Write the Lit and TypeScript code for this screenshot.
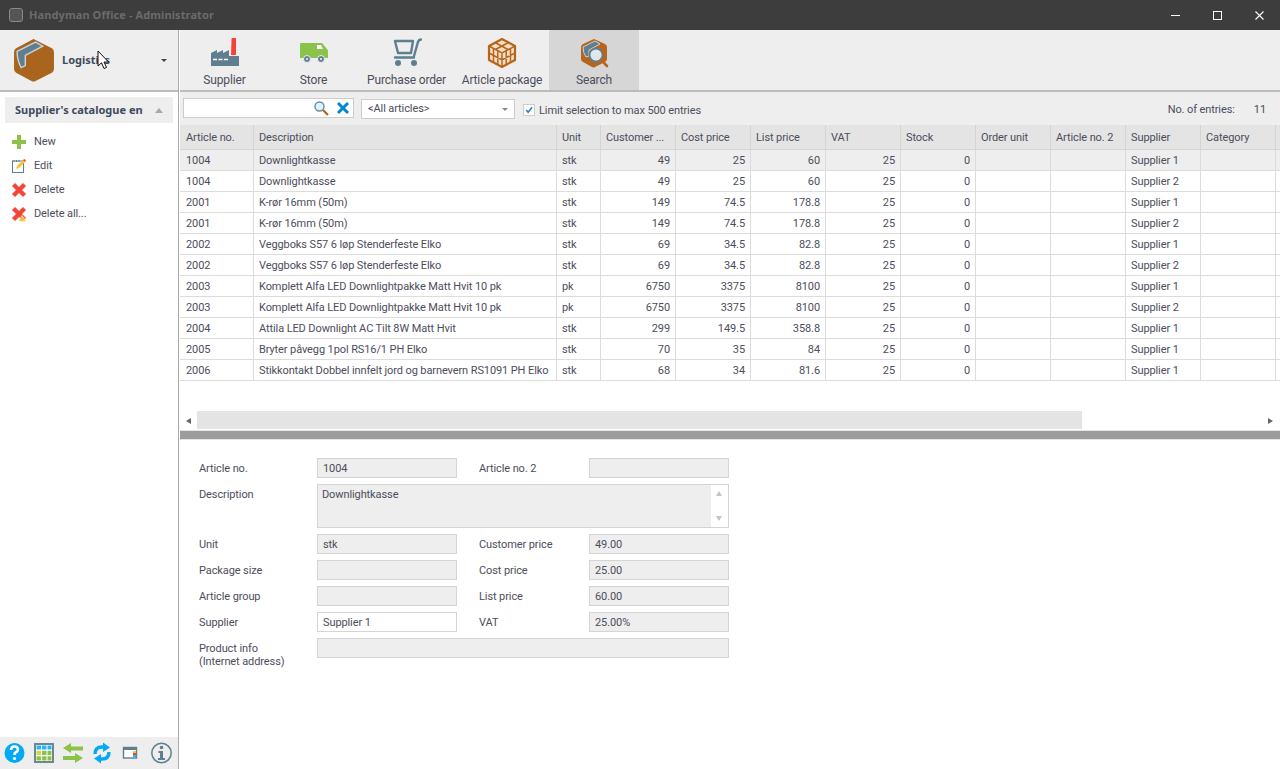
import { LitElement, css, html, svg } from "lit";
import { customElement } from "lit/decorators.js";

const columns = [
  ["Article no.", 74],
  ["Description", 303],
  ["Unit", 44],
  ["Customer ...", 75],
  ["Cost price", 75],
  ["List price", 75],
  ["VAT", 75],
  ["Stock", 75],
  ["Order unit", 75],
  ["Article no. 2", 75],
  ["Supplier", 75],
  ["Category", 75],
] as const;

const rows = [
  ["1004", "Downlightkasse", "stk", "49", "25", "60", "25", "0", "", "", "Supplier 1", ""],
  ["1004", "Downlightkasse", "stk", "49", "25", "60", "25", "0", "", "", "Supplier 2", ""],
  ["2001", "K-rør 16mm (50m)", "stk", "149", "74.5", "178.8", "25", "0", "", "", "Supplier 1", ""],
  ["2001", "K-rør 16mm (50m)", "stk", "149", "74.5", "178.8", "25", "0", "", "", "Supplier 2", ""],
  ["2002", "Veggboks S57 6 løp Stenderfeste Elko", "stk", "69", "34.5", "82.8", "25", "0", "", "", "Supplier 1", ""],
  ["2002", "Veggboks S57 6 løp Stenderfeste Elko", "stk", "69", "34.5", "82.8", "25", "0", "", "", "Supplier 2", ""],
  ["2003", "Komplett Alfa LED Downlightpakke Matt Hvit 10 pk", "pk", "6750", "3375", "8100", "25", "0", "", "", "Supplier 1", ""],
  ["2003", "Komplett Alfa LED Downlightpakke Matt Hvit 10 pk", "pk", "6750", "3375", "8100", "25", "0", "", "", "Supplier 2", ""],
  ["2004", "Attila LED Downlight AC Tilt 8W Matt Hvit", "stk", "299", "149.5", "358.8", "25", "0", "", "", "Supplier 1", ""],
  ["2005", "Bryter påvegg 1pol RS16/1 PH Elko", "stk", "70", "35", "84", "25", "0", "", "", "Supplier 1", ""],
  ["2006", "Stikkontakt Dobbel innfelt jord og barnevern RS1091 PH Elko", "stk", "68", "34", "81.6", "25", "0", "", "", "Supplier 1", ""],
];

const numeric = new Set([3, 4, 5, 6, 7]);

const boxIcon = svg`
  <path d="M20 1 L38 10 Q40 11 40 14 V30 Q40 33 38 34 L22 42 Q20 43 18 42 L3 34 Q1 33 1 30 V14 Q1 11 3 10 Z" fill="#a9641e"/>
  <path d="M4 13 L22 4 L29 8 L12 17 V27 L8 29 Q4 22 4 13 Z" fill="#5f7f90" stroke="#c9d3d8" stroke-width="1.4"/>`;

const factoryIcon = svg`
  <path d="M21.6 0 H26 V17 H21 Z" fill="#f44336"/>
  <path d="M1 28 V18 V15 L7 12 V15 L13 12 V15 L19 12 V18 H29 V28 Z" fill="#5f7f90"/>
  <path d="M3 21.5 H7 M8.5 21.5 H12.5 M14 21.5 H18" stroke="#fff" stroke-width="1.6"/>`;

const truckIcon = svg`
  <path d="M1 6 Q1 5 2 5 H23 L28 11 Q29 12 29 14 V20 H1 Z" fill="#8bc34a"/>
  <path d="M18 7 H22 L24 11 H18 Z" fill="#fff"/>
  <circle cx="8" cy="21" r="3.5" fill="#5f7f90" stroke="#eee"/>
  <circle cx="22" cy="21" r="3.5" fill="#5f7f90" stroke="#eee"/>
  <circle cx="8" cy="21" r="1" fill="#fff"/>
  <circle cx="22" cy="21" r="1" fill="#fff"/>`;

const cartIcon = svg`
  <path d="M3 3 H21 L19 15 H6 Z" fill="none" stroke="#5f7f90" stroke-width="2.4" stroke-linejoin="round"/>
  <path d="M22 18 L26 4 Q27 1.5 29 1.5 M3 19.5 H22" fill="none" stroke="#5f7f90" stroke-width="2.4" stroke-linecap="round"/>
  <circle cx="6" cy="25" r="3" fill="#5f7f90"/>
  <circle cx="22" cy="25" r="3" fill="#5f7f90"/>`;

const crateIcon = svg`
  <g transform="translate(1 0)">
    <path d="M14 1 L27 8 V22 L14 29 L1 22 V8 Z" fill="#f6dfc4" stroke="#b5651d" stroke-width="2.2" stroke-linejoin="round"/>
    <path d="M1 8 L14 15 L27 8 M14 15 V29 M7 4.5 L20 11.5 M20.5 4.5 L7.5 11.5 M5.5 10.5 V25 M9.8 13 V27 M18.2 13 V27 M22.5 10.5 V25 M1 15 L14 22 L27 15" fill="none" stroke="#b5651d" stroke-width="1.5"/>
  </g>`;

const searchBoxIcon = svg`
  <g transform="translate(1 0)">
    <path d="M14 1 L25 6 Q27 7 27 9 V21 Q27 23 25 24 L15 29 Q14 30 12 29 L3 24 Q1 23 1 21 V9 Q1 7 3 6 Z" fill="#b5651d"/>
    <path d="M3 9 L15 3 L20 6 L9 12 V18 L6 19 Q3 15 3 9 Z" fill="#5f7f90" stroke="#c9d3d8"/>
    <circle cx="16" cy="17" r="6.5" fill="#dfe7ea" stroke="#5f7f90" stroke-width="1.8"/>
    <path d="M21 22 L27 28" stroke="#b5651d" stroke-width="2.6" stroke-linecap="round"/>
  </g>`;

const tools = [
  ["Supplier", 89, factoryIcon, false],
  ["Store", 89, truckIcon, false],
  ["Purchase order", 97, cartIcon, false],
  ["Article package", 94, crateIcon, false],
  ["Search", 90, searchBoxIcon, true],
] as const;

const redCross = svg`<path d="M1.5 4 L4 1.5 L8 5.5 L12 1.5 L14.5 4 L10.5 8 L14.5 12 L12 14.5 L8 10.5 L4 14.5 L1.5 12 L5.5 8 Z" fill="#f44336" stroke="#f44336" stroke-linejoin="round"/>`;

const sideItems = [
  ["New", svg`<path d="M6 1 H10 V6 H15 V10 H10 V15 H6 V10 H1 V6 H6 Z" fill="#8bc34a"/>`],
  ["Edit", svg`<rect x="1.5" y="3" width="11" height="11.5" fill="#fff" stroke="#5f7f90"/><path d="M3 2 V4 M5.5 2 V4 M8 2 V4" stroke="#5f7f90"/><path d="M5 11 L6 8 L12 2 L14 4 L8 10 Z" fill="#fbc02d"/><path d="M12 2 L13.5 1 L15 2.5 L14 4 Z" fill="#f44336"/>`],
  ["Delete", redCross],
  ["Delete all...", svg`${redCross}<path d="M11 9.5 L15.5 15.5 H7.5 Z" fill="#fbc02d" stroke="#fff" stroke-width=".6"/>`],
] as const;

const fields = [
  ["Unit", "stk", "Customer price", "49.00"],
  ["Package size", "", "Cost price", "25.00"],
  ["Article group", "", "List price", "60.00"],
];

@customElement("app-root")
export class AppRoot extends LitElement {
  static styles = css`
    :host {
      display: flex;
      flex-direction: column;
      position: relative;
      width: 1280px;
      height: 769px;
      overflow: hidden;
      background: #fff;
      color: #4d4d5c;
      font: 11px/14px Roboto, "Noto Sans", sans-serif;
      letter-spacing: -0.1px;
    }
    svg {
      display: block;
      flex: none;
    }
    .title {
      flex: none;
      height: 30px;
      display: flex;
      align-items: center;
      background: #3d3d3d;
      padding-left: 9px;
      color: #6b6b6b;
      font: 700 11px "Noto Sans", sans-serif;
      letter-spacing: 0.1px;
    }
    .title span {
      margin-top: -1px;
    }
    .app-icon {
      width: 12px;
      height: 12px;
      margin-right: 6px;
      border: 1px solid #8a8a8a;
      border-radius: 3px;
      background: #555;
    }
    .win {
      margin-left: auto;
      display: flex;
    }
    .win button {
      width: 42px;
      height: 30px;
      padding: 0;
      border: 0;
      background: none;
      display: flex;
      align-items: center;
      justify-content: center;
    }
    .body {
      flex: 1;
      display: flex;
      min-height: 0;
    }
    .side {
      flex: none;
      width: 178px;
      display: flex;
      flex-direction: column;
      border-right: 1px solid #ababab;
    }
    .module {
      flex: none;
      height: 60px;
      display: flex;
      align-items: center;
      padding: 0 11px 0 13px;
      background: #eee;
      border-bottom: 2px solid #bcbcbc;
      font: 700 11px "Noto Sans", sans-serif;
      letter-spacing: 0;
      color: #3f4a5c;
    }
    .module span {
      margin: -1px 0 0 7px;
      flex: 1;
    }
    .caret {
      width: 0;
      height: 0;
      border: 3px solid transparent;
      border-top: 3px solid #444;
      border-bottom: 0;
    }
    .group {
      flex: none;
      height: 26px;
      margin: 5px 5px 0;
      padding: 0 10px;
      display: flex;
      align-items: center;
      background: #eee;
      font: 700 11px "Noto Sans", sans-serif;
      letter-spacing: 0;
      color: #3f4a5c;
    }
    .group span {
      width: 129px;
      margin-top: -2px;
      overflow: hidden;
      white-space: nowrap;
    }
    .group i {
      margin-left: 12px;
      width: 0;
      height: 0;
      border: 4px solid transparent;
      border-top: 0;
      border-bottom: 5px solid #a8a8a8;
    }
    .items {
      flex: 1;
      padding-top: 7px;
    }
    .item {
      height: 24px;
      display: flex;
      align-items: center;
      gap: 7px;
      padding-left: 11px;
    }
    .foot {
      flex: none;
      height: 32px;
      background: #eee;
      display: flex;
      align-items: center;
      padding-left: 4px;
    }
    .main {
      flex: 1;
      min-width: 0;
      display: flex;
      flex-direction: column;
      margin-left: 1px;
    }
    .tools {
      flex: none;
      height: 60px;
      display: flex;
      background: #eee;
      border-bottom: 2px solid #bcbcbc;
    }
    .tool {
      display: flex;
      flex-direction: column;
      align-items: center;
      color: #4d4d5c;
      font-size: 12px;
      line-height: 16px;
      letter-spacing: -0.15px;
    }
    .tool.on {
      background: #d6d6d6;
    }
    .tool svg {
      margin: 8px 0 4px;
    }
    .filter {
      flex: none;
      height: 33px;
      display: flex;
      align-items: center;
      background: #eee;
      padding: 0 14px 0 3px;
    }
    .search {
      box-sizing: border-box;
      width: 171px;
      height: 20px;
      display: flex;
      align-items: center;
      justify-content: flex-end;
      gap: 7px;
      padding-right: 3px;
      background: #fff;
      border: 1px solid #ccc;
      margin-top: -1px;
    }
    .select {
      box-sizing: border-box;
      width: 154px;
      height: 20px;
      margin-left: 7px;
      padding: 1px 6px 0;
      display: flex;
      align-items: center;
      justify-content: space-between;
      background: #fff;
      border: 1px solid #ccc;
    }
    .select i {
      width: 0;
      height: 0;
      border: 3px solid transparent;
      border-top: 3px solid #888;
      border-bottom: 0;
    }
    .check {
      box-sizing: border-box;
      width: 12px;
      height: 12px;
      margin: 2px 4px 0 8px;
      padding: 1px;
      background: #fff;
      border: 1px solid #ccc;
    }
    .limit {
      margin-top: 4px;
    }
    .count {
      margin: 2px 0 0 auto;
      display: flex;
      gap: 19px;
    }
    .grid {
      flex: none;
      height: 286px;
      display: flex;
      flex-direction: column;
      background: #fff;
    }
    .row {
      display: flex;
      height: 21px;
      flex: none;
      box-sizing: border-box;
      border-bottom: 1px solid #dcdcdc;
      white-space: nowrap;
    }
    .row.head {
      height: 25px;
      background: #e4e4e4;
      border-bottom: 1px solid #d4d4d4;
    }
    .row.sel {
      background: #eee;
    }
    .cell {
      box-sizing: border-box;
      flex: none;
      padding: 0 5px;
      border-right: 1px solid #dcdcdc;
      line-height: 22px;
      overflow: hidden;
    }
    .cell:first-child {
      padding-left: 6px;
    }
    .head .cell {
      line-height: 26px;
      border-right: 1px solid #d4d4d4;
    }
    .cell.num {
      text-align: right;
    }
    .spacer {
      flex: 1;
    }
    .hscroll {
      flex: none;
      position: relative;
      height: 19px;
      display: flex;
      align-items: center;
    }
    .hscroll .track {
      flex: 1;
      height: 18px;
      margin: 0 0 1px 17px;
    }
    .hscroll .thumb {
      height: 100%;
      width: 885px;
      background: #e4e4e4;
    }
    .arrow-l,
    .arrow-r {
      width: 0;
      height: 0;
      border: 3.5px solid transparent;
    }
    .arrow-l {
      position: absolute;
      left: 6px;
      border-left: 0;
      border-right: 5px solid #666;
    }
    .arrow-r {
      margin: 0 7px 0 0;
      border-right: 0;
      border-left: 5px solid #666;
    }
    .split {
      flex: none;
      height: 8px;
      background: #9c9c9c;
      border-top: 1px solid #e4e4e4;
      border-bottom: 1px solid #e4e4e4;
    }
    .form {
      flex: 1;
      display: grid;
      grid-template-columns: 118px 140px 22px 110px 140px;
      grid-template-rows: 20px 44px repeat(5, 20px);
      row-gap: 6px;
      align-content: start;
      padding: 18px 0 0 19px;
    }
    .form label {
      line-height: 22px;
      white-space: nowrap;
    }
    .lab2 {
      grid-column: 4;
    }
    .input {
      box-sizing: border-box;
      height: 20px;
      padding: 0 5px;
      line-height: 20px;
      background: #eee;
      border: 1px solid #d4d4d4;
    }
    .input.edit {
      background: #fff;
    }
    .desc {
      grid-column: 2 / 6;
      position: relative;
      box-sizing: border-box;
      height: 44px;
      padding: 3px 4px;
      background: linear-gradient(to right, #eee calc(100% - 17px), #fff 0);
      border: 1px solid #d4d4d4;
    }
    .desc i {
      position: absolute;
      right: 6px;
      width: 0;
      height: 0;
      border: 3.5px solid transparent;
    }
    .desc .up {
      top: 6px;
      border-top: 0;
      border-bottom: 5px solid #c4c4c4;
    }
    .desc .down {
      bottom: 6px;
      border-bottom: 0;
      border-top: 5px solid #c4c4c4;
    }
    .wide {
      grid-column: 2 / 6;
    }
    .form .two {
      line-height: 13px;
      padding-top: 4px;
    }
    .cursor {
      position: absolute;
      left: 97px;
      top: 50px;
    }
  `;

  override render() {
    return html`
      <div class="title">
        <div class="app-icon"></div>
        <span>Handyman Office - Administrator</span>
        <div class="win">
          <button>
            <svg width="14" height="12"><path d="M3 6.5 H12" stroke="#fff"/></svg>
          </button>
          <button>
            <svg width="14" height="12"><rect x="3.5" y="2.5" width="8" height="8" fill="none" stroke="#fff"/></svg>
          </button>
          <button>
            <svg width="14" height="12"><path d="M3.5 2.5 L11.5 10.5 M11.5 2.5 L3.5 10.5" stroke="#fff" stroke-width="1.1"/></svg>
          </button>
        </div>
      </div>
      <div class="body">
        <div class="side">
          <div class="module">
            <svg width="42" height="44" viewBox="0 0 41 43">${boxIcon}</svg>
            <span>Logistics</span>
            <div class="caret"></div>
          </div>
          <div class="group"><span>Supplier's catalogue entries</span><i></i></div>
          <div class="items">
            ${sideItems.map(
              ([name, icon]) => html`
                <div class="item">
                  <svg width="16" height="16" viewBox="0 0 16 16">${icon}</svg>
                  ${name}
                </div>
              `
            )}
          </div>
          <div class="foot">
            <svg width="174" height="24" viewBox="0 0 174 24">
              <circle cx="10.5" cy="12" r="10" fill="#03a9f4"/>
              <path d="M7 9 Q7 5.5 10.5 5.5 Q14 5.5 14 8.5 Q14 10.5 11.5 11.5 Q10.5 12 10.5 14" fill="none" stroke="#fff" stroke-width="2.6"/>
              <circle cx="10.5" cy="17.5" r="1.6" fill="#fff"/>
              <rect x="31" y="3" width="18" height="18" fill="#fff" stroke="#70878f" stroke-width="2"/>
              <path d="M32.5 4.5 H37 V8.5 H32.5 Z M38 4.5 H42.5 V8.5 H38 Z M43.5 4.5 H47.5 V8.5 H43.5 Z" fill="#29b6f6"/>
              <path d="M38 9.8 H42.5 V14 H38 Z M43.5 9.8 H47.5 V14 H43.5 Z M32.5 15.2 H37 V19.5 H32.5 Z M38 15.2 H42.5 V19.5 H38 Z M43.5 15.2 H47.5 V19.5 H43.5 Z" fill="#8bc34a"/>
              <path d="M32.5 9.8 H37 V14 H32.5 Z" fill="#cddc39"/>
              <path d="M59 7 L67 2 V5.5 H79 V9.5 H67 V12 Z M79 17 L71 12 V15 H59 V19 H71 V22 Z" fill="#8bc34a"/>
              <path d="M91 13 Q91 6 98 6 H100 M105 11 Q105 18 98 18 H96" fill="none" stroke="#03a9f4" stroke-width="3.4"/>
              <path d="M99 1.5 L106 6.5 L99 11 Z M97 13 L90 17.5 L97 22.5 Z" fill="#03a9f4"/>
              <rect x="119.5" y="6.5" width="13" height="10.5" fill="#fff" stroke="#5f7f90" stroke-width="1.4"/>
              <path d="M119 6 H133 V9 H119 Z" fill="#5f7f90"/>
              <path d="M129 10 H132 V12 H129 Z" fill="#fbc02d"/>
              <path d="M129 12 H132 V14 H129 Z" fill="#f44336"/>
              <path d="M129 14 H132 V16.5 H129 Z" fill="#29b6f6"/>
              <circle cx="157.5" cy="12" r="9.7" fill="none" stroke="#5f7f90" stroke-width="1.5"/>
              <circle cx="157.5" cy="6.5" r="1.8" fill="#5f7f90"/>
              <path d="M154.5 10 H159 V17 H161 V19 H154 V17 H156 V12 H154.5 Z" fill="#5f7f90"/>
            </svg>
          </div>
        </div>
        <div class="main">
          <div class="tools">
            ${tools.map(
              ([label, width, icon, on]) => html`
                <div class="tool ${on ? "on" : ""}" style="width:${width}px">
                  <svg width="30" height="30" viewBox="0 0 30 30">${icon}</svg>
                  ${label}
                </div>
              `
            )}
          </div>
          <div class="filter">
            <div class="search">
              <svg width="16" height="16" viewBox="0 0 16 16">
                <circle cx="6.5" cy="6.5" r="4.5" fill="#e3f2fd" stroke="#5f8fa8" stroke-width="1.4"/>
                <path d="M10 10 L15 15" stroke="#b5651d" stroke-width="2.2"/>
              </svg>
              <svg width="14" height="14" viewBox="0 0 14 14">
                <path d="M2 2 L12 12 M12 2 L2 12" stroke="#0288d1" stroke-width="3"/>
              </svg>
            </div>
            <div class="select">&lt;All articles&gt;<i></i></div>
            <div class="check">
              <svg width="8" height="8" viewBox="0 0 9 9"><path d="M1.5 4.5 L3.5 7 L8 1.5" fill="none" stroke="#2a78c8" stroke-width="1.7"/></svg>
            </div>
            <span class="limit">Limit selection to max 500 entries</span>
            <div class="count"><span>No. of entries:</span><span>11</span></div>
          </div>
          <div class="grid">
            <div class="row head">
              ${columns.map(([name, w]) => html`<div class="cell" style="width:${w}px">${name}</div>`)}
            </div>
            ${rows.map(
              (r, i) => html`
                <div class="row ${i === 0 ? "sel" : ""}">
                  ${r.map(
                    (v, c) =>
                      html`<div class="cell ${numeric.has(c) ? "num" : ""}" style="width:${columns[c][1]}px">${v}</div>`
                  )}
                </div>
              `
            )}
            <div class="spacer"></div>
          </div>
          <div class="hscroll">
            <div class="arrow-l"></div>
            <div class="track"><div class="thumb"></div></div>
            <div class="arrow-r"></div>
          </div>
          <div class="split"></div>
          <div class="form">
            <label>Article no.</label>
            <div class="input">1004</div>
            <label class="lab2">Article no. 2</label>
            <div class="input"></div>
            <label>Description</label>
            <div class="desc">Downlightkasse<i class="up"></i><i class="down"></i></div>
            ${fields.map(
              ([a, b, c, d]) => html`
                <label>${a}</label>
                <div class="input">${b}</div>
                <label class="lab2">${c}</label>
                <div class="input">${d}</div>
              `
            )}
            <label>Supplier</label>
            <div class="input edit">Supplier 1</div>
            <label class="lab2">VAT</label>
            <div class="input">25.00%</div>
            <label class="two">Product info<br />(Internet address)</label>
            <div class="input wide"></div>
          </div>
        </div>
      </div>
      <svg class="cursor" width="15" height="21" viewBox="0 0 15 21">
        <path d="M1 1 V16 L4.5 12.8 L7 18.5 L9.5 17.5 L7 12 H11.5 Z" fill="#fff" stroke="#111"/>
      </svg>
    `;
  }
}
